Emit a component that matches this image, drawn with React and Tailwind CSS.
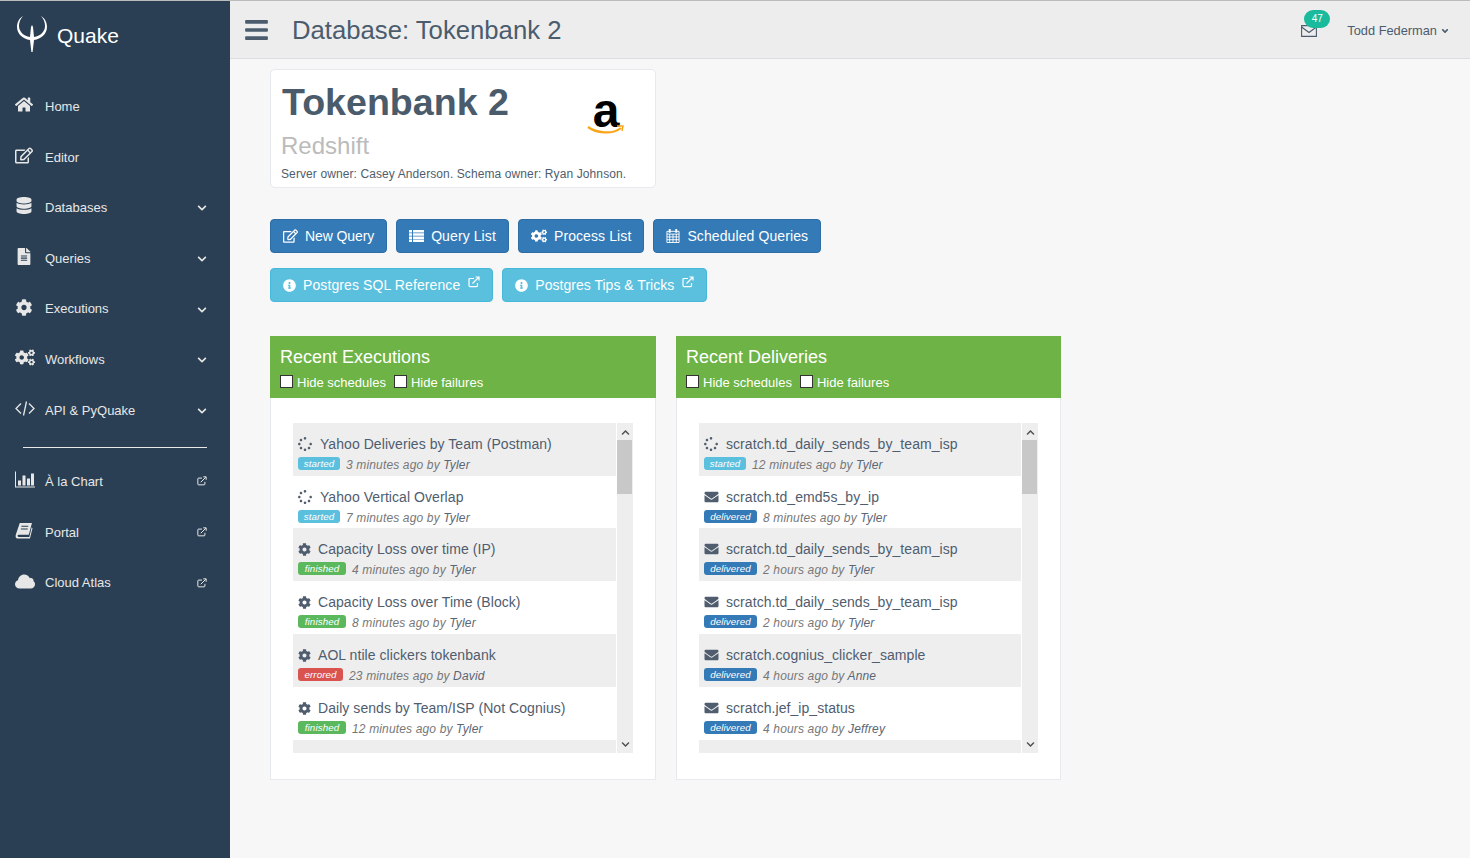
import React from 'react';
import {
  FaHome, FaRegEdit, FaDatabase, FaFileAlt, FaCog, FaCogs, FaChevronDown, FaChevronUp, FaBars,
  FaEnvelope, FaAngleDown, FaInfoCircle, FaSpinner,
} from 'react-icons/fa';

function ExternalIcon({ className }) {
  return (
    <svg viewBox="0 0 12 12" className={className} fill="none" stroke="currentColor" strokeWidth="1.2">
      <path d="M9.5 7v2.6a1 1 0 0 1-1 1H2a1 1 0 0 1-1-1V3.5a1 1 0 0 1 1-1h4" />
      <path d="M4.5 7.5 10.5 1.5M7.5 1h3.5v3.5" />
    </svg>
  );
}

function QuakeLogo() {
  return (
    <svg viewBox="0 0 30 36" className="w-[30px] h-[36px]" fill="#fff">
      <path d="M6 0C1 3 0 8 0 11c0 7 6 12 13 13l1.4 12h1.2L17 24c7-1 13-6 13-13 0-3-1-8-6-11 3 3 4 7 4 10 0 6-5 10-11 11l-1-10-1-2-1 2-1 10C7 20 2 16 2 10c0-3 1-7 4-10z" />
    </svg>
  );
}

function BookIcon({ className }) {
  return (
    <svg viewBox="0 0 16 16" className={className} fill="currentColor">
      <path d="M4 1h11.5l-3 11H3c-1.4 0-1.4 2 0 2h10l2.2-9 .8.8-2.4 9.7H2C0 15.5-.2 13.5.4 11.5z" />
      <path d="M5.5 4H12M5 6.500h6.500" stroke="#2a3f54" strokeWidth="1" />
    </svg>
  );
}

function ChartIcon({ className }) {
  return (
    <svg viewBox="0 0 20 16" className={className} fill="currentColor">
      <path d="M0 0h1v15h19v1H0z" />
      <path d="M3 9h3v5H3zM7.5 4h3v10h-3zM12 7h3v7h-3zM16 2h3v12h-3z" />
    </svg>
  );
}

function CodeIcon({ className }) {
  return (
    <svg viewBox="0 0 20 16" className={className} fill="none" stroke="currentColor" strokeWidth="1.3">
      <path d="M6 3 1 8l5 5M14 3l5 5-5 5M11.5 1l-3 14" />
    </svg>
  );
}

function ListIcon({ className }) {
  return (
    <svg viewBox="0 0 15 12" className={className} fill="currentColor">
      <path d="M0 0h3v2.500H0zM4 0h11v2.500H4zM0 3.200h3v2.500H0zM4 3.200h11v2.500H4zM0 6.400h3v2.500H0zM4 6.400h11v2.500H4zM0 9.600h3V12H0zM4 9.600h11V12H4z" />
    </svg>
  );
}

function CalendarIcon({ className }) {
  return (
    <svg viewBox="0 0 14 15" className={className} fill="none" stroke="currentColor" strokeWidth="1">
      <path d="M.5 2.500h13v12H.5z" />
      <path d="M.5 5.500h13M.5 8.500h13M.5 11.500h13M3.500 5.500v9M7 5.500v9M10.500 5.500v9" />
      <path d="M3.500 0v4M10.500 0v4" strokeWidth="2" />
    </svg>
  );
}

function MailOutline({ className }) {
  return (
    <svg viewBox="0 0 16 12" className={className} fill="none" stroke="currentColor" strokeWidth="1.1">
      <path d="M.6.6h14.800v10.800H.6z" />
      <path d="M.6 2 8 7.500 15.400 2" />
    </svg>
  );
}

function CloudIcon({ className }) {
  return (
    <svg viewBox="0 0 20 14" className={className} fill="currentColor">
      <path d="M4.500 14C2 14 0 12 0 9.700 0 7.800 1.200 6.200 3 5.700 3.300 2.500 6 0 9.200 0c2.500 0 4.700 1.500 5.700 3.700.5-.2 1-.3 1.500-.1 1.500.3 2.400 1.700 2.100 3.200 1 .6 1.500 1.700 1.500 2.900 0 2.400-1.900 4.300-4.300 4.300z" />
    </svg>
  );
}

const navTop = [
  { label: 'Home', icon: FaHome },
  { label: 'Editor', icon: FaRegEdit },
  { label: 'Databases', icon: FaDatabase, more: true },
  { label: 'Queries', icon: FaFileAlt, more: true },
  { label: 'Executions', icon: FaCog, more: true },
  { label: 'Workflows', icon: FaCogs, more: true, wide: true },
  { label: 'API & PyQuake', icon: CodeIcon, more: true, wide: true },
];

const navBottom = [
  { label: 'À la Chart', icon: ChartIcon, ext: true, wide: true },
  { label: 'Portal', icon: BookIcon, ext: true },
  { label: 'Cloud Atlas', icon: CloudIcon, ext: true, wide: true },
];

const executions = [
  { kind: 'spin', title: 'Yahoo Deliveries by Team (Postman)', status: 'started', when: '3 minutes ago by', who: 'Tyler' },
  { kind: 'spin', title: 'Yahoo Vertical Overlap', status: 'started', when: '7 minutes ago by', who: 'Tyler' },
  { kind: 'cog', title: 'Capacity Loss over time (IP)', status: 'finished', when: '4 minutes ago by', who: 'Tyler' },
  { kind: 'cog', title: 'Capacity Loss over Time (Block)', status: 'finished', when: '8 minutes ago by', who: 'Tyler' },
  { kind: 'cog', title: 'AOL ntile clickers tokenbank', status: 'errored', when: '23 minutes ago by', who: 'David' },
  { kind: 'cog', title: 'Daily sends by Team/ISP (Not Cognius)', status: 'finished', when: '12 minutes ago by', who: 'Tyler' },
];

const deliveries = [
  { kind: 'spin', title: 'scratch.td_daily_sends_by_team_isp', status: 'started', when: '12 minutes ago by', who: 'Tyler' },
  { kind: 'mail', title: 'scratch.td_emd5s_by_ip', status: 'delivered', when: '8 minutes ago by', who: 'Tyler' },
  { kind: 'mail', title: 'scratch.td_daily_sends_by_team_isp', status: 'delivered', when: '2 hours ago by', who: 'Tyler' },
  { kind: 'mail', title: 'scratch.td_daily_sends_by_team_isp', status: 'delivered', when: '2 hours ago by', who: 'Tyler' },
  { kind: 'mail', title: 'scratch.cognius_clicker_sample', status: 'delivered', when: '4 hours ago by', who: 'Anne' },
  { kind: 'mail', title: 'scratch.jef_ip_status', status: 'delivered', when: '4 hours ago by', who: 'Jeffrey' },
];

const badgeStyles = {
  started: 'bg-[#5bc0de] w-[42px]',
  finished: 'bg-[#5cb85c] w-[48px]',
  errored: 'bg-[#d9534f] w-[45px]',
  delivered: 'bg-[#337ab7] w-[53px]',
};

function NavRow({ item }) {
  const Icon = item.icon;
  return (
    <div className="h-[50.6px] flex items-center pl-[15px] pr-[23px] text-[#e7e7e7] text-[13px]">
      <div className="w-[30px] shrink-0 -mt-[4px]">
        <Icon className={item.wide ? 'w-[20px] h-[17px]' : 'w-[18px] h-[17px]'} />
      </div>
      <span className="flex-1">{item.label}</span>
      {item.more && <FaChevronDown className="w-[10px] h-[10px] mt-px" />}
      {item.ext && <ExternalIcon className="w-[10px] h-[10px] -mt-px" />}
    </div>
  );
}

function Sidebar() {
  return (
    <aside className="w-[230px] shrink-0 bg-[#2a3f54] flex flex-col">
      <div className="h-[80.4px] flex items-start pl-[17px] pt-[15px] text-white">
        <QuakeLogo />
        <span className="ml-[10px] mt-[5px] text-[21px] leading-[30px]">Quake</span>
      </div>
      {navTop.map(item => <NavRow key={item.label} item={item} />)}
      <div className="h-px bg-[#e7e7e7] ml-[23px] mr-[23px] mt-[11.4px] mb-[8.6px]" />
      {navBottom.map(item => <NavRow key={item.label} item={item} />)}
    </aside>
  );
}

function TopBar() {
  return (
    <header className="h-[58px] shrink-0 bg-[#ededed] border-b border-[#d9dee4] flex items-center pl-[15px] pr-[20px] text-[#4b5c6d]">
      <FaBars className="w-[23px] h-[26px]" />
      <h1 className="ml-[24px] mt-[3px] text-[25.7px] font-normal leading-none">Database: Tokenbank 2</h1>
      <div className="ml-auto flex items-center mt-[2px]">
        <div className="relative w-[16px] h-[12px] mr-[30px]">
          <MailOutline className="w-[16px] h-[12px]" />
          <span className="absolute -top-[15px] left-[3px] w-[26px] h-[18px] rounded-full bg-[#1abb9c] text-white text-[10px] leading-[18px] text-center">47</span>
        </div>
        <span className="text-[12.8px]">Todd Federman</span>
        <FaAngleDown className="ml-[3px] w-[10px] h-[10px]" />
      </div>
    </header>
  );
}

function ActionButton({ icon: Icon, iconClass = 'w-[15px] h-[14px] mr-[7px]', label, info, ext, track = 'tracking-[0.1px]' }) {
  const tone = info ? 'bg-[#5bc0de] border-[#46b8da]' : 'bg-[#337ab7] border-[#2e6da4]';
  return (
    <button className={`h-[34px] px-[12px] flex items-center rounded border text-white text-[14px] ${track} ${tone}`}>
      <Icon className={iconClass} />
      <span>{label}</span>
      {ext && <ExternalIcon className="w-[12px] h-[12px] ml-[8px] -mt-[6px]" />}
    </button>
  );
}

function RowIcon({ kind }) {
  if (kind === 'spin') return <FaSpinner className="w-[14px] h-[14px] mr-[8px]" />;
  if (kind === 'cog') return <FaCog className="w-[13px] h-[13px] mr-[7px]" />;
  return <FaEnvelope className="w-[15px] h-[14px] mr-[7px]" />;
}

function ListRow({ row, index }) {
  const shaded = index % 2 === 0;
  return (
    <div className={`shrink-0 pl-[5px] pt-[13px] ${index === 1 ? 'h-[52px]' : 'h-[53px]'} ${shaded ? 'bg-[#eeeeee]' : 'bg-white'}`}>
      <div className="flex items-center h-[16px] text-[14px] tracking-[0.06px] text-[#4f5d6e]">
        <RowIcon kind={row.kind} />
        <span>{row.title}</span>
      </div>
      <div className="flex items-center h-[13px] mt-[5px]">
        <span className={`h-[13px] leading-[13px] text-center rounded-[3px] text-white text-[9.75px] tracking-[0.1px] italic ${badgeStyles[row.status]}`}>{row.status}</span>
        <span className="ml-[6px] mt-[2px] text-[12px] tracking-[0.15px] italic text-[#777777] whitespace-pre">{row.when} <span className="text-[#5a6675]">{row.who}</span></span>
      </div>
    </div>
  );
}

function Panel({ title, rows, className, listClass }) {
  return (
    <section className={`h-[444px] flex flex-col ${className}`}>
      <div className="h-[62px] shrink-0 bg-[#6db345] text-white px-[10px] pt-[10px]">
        <h2 className="text-[18px] font-normal leading-[22px]">{title}</h2>
        <div className="flex items-start text-[13px] mt-[7px] leading-[16px]">
          <input type="checkbox" className="appearance-none w-[13px] h-[13px] bg-white border border-[#333333] mr-[4px]" />
          <span>Hide schedules</span>
          <input type="checkbox" className="appearance-none w-[13px] h-[13px] bg-white border border-[#333333] ml-[8px] mr-[4px]" />
          <span>Hide failures</span>
        </div>
      </div>
      <div className="flex-1 bg-white border border-t-0 border-[#e6e9ed] pt-[25px] pl-[22px]">
        <div className={`flex h-[330px] ${listClass}`}>
          <div className="flex-1 flex flex-col overflow-hidden">
            {rows.map((row, i) => <ListRow key={i} row={row} index={i} />)}
            <div className="flex-1 bg-[#eeeeee]" />
          </div>
          <div className="w-[16px] ml-px bg-[#eeeeee] flex flex-col items-center text-[#505050] relative">
            <FaChevronUp className="w-[9px] h-[9px] mt-[5px]" />
            <div className="absolute top-[17px] left-0 w-[15px] h-[54px] bg-[#c8c8c8]" />
            <FaChevronDown className="w-[9px] h-[9px] mt-auto mb-[4px]" />
          </div>
        </div>
      </div>
    </section>
  );
}

export default function App() {
  return (
    <div className="h-[858px] flex flex-col bg-[#f7f7f7] overflow-hidden text-[#4b5c6d]" style={{ fontFamily: '"Liberation Sans", Arial, sans-serif' }}>
      <div className="h-px shrink-0 bg-[#bbbbbb]" />
      <div className="flex flex-1 min-h-0">
        <Sidebar />
        <main className="flex-1 flex flex-col min-w-0">
          <TopBar />
          <div className="pl-[40px] pt-[10px]">
            <div className="w-[386px] h-[119px] bg-white border border-[#e6e9ed] rounded-[5px] pl-[10px] pr-[30px] flex justify-between">
              <div className="w-[300px] whitespace-nowrap">
                <div className="text-[37.6px] font-bold leading-[42px] mt-[11px] ml-px text-[#4a5b6b]">Tokenbank 2</div>
                <div className="text-[24px] leading-[28px] mt-[9px] text-[#bbbbbb]">Redshift</div>
                <div className="text-[12px] tracking-[0.1px] leading-[14px] mt-[7px] text-[#4f5d6e]">Server owner: Casey Anderson. Schema owner: Ryan Johnson.</div>
              </div>
              <div className="relative w-[38px] h-[45px] mt-[23px]">
                <div className="text-[48px] font-bold leading-[36px] text-black text-center">a</div>
                <svg viewBox="0 0 38 10" className="absolute left-0 top-[32px] w-[38px] h-[10px]" fill="none">
                  <path d="M1 2c8 6 24 8 33 1" stroke="#f9a51a" strokeWidth="2.200" />
                  <path d="M30 1h6l-1 5" stroke="#f9a51a" strokeWidth="1.500" />
                </svg>
              </div>
            </div>

            <div className="flex gap-[9px] mt-[31px]">
              <ActionButton icon={FaRegEdit} label="New Query" track="tracking-[-0.1px]" />
              <ActionButton icon={ListIcon} label="Query List" />
              <ActionButton icon={FaCogs} iconClass="w-[16px] h-[14px] mr-[7px]" label="Process List" />
              <ActionButton icon={CalendarIcon} iconClass="w-[14px] h-[14px] mr-[7px]" label="Scheduled Queries" />
            </div>
            <div className="flex gap-[9px] mt-[15px]">
              <ActionButton icon={FaInfoCircle} iconClass="w-[13px] h-[13px] mr-[7px]" label="Postgres SQL Reference" info ext />
              <ActionButton icon={FaInfoCircle} iconClass="w-[13px] h-[13px] mr-[7px]" label="Postgres Tips & Tricks" info ext track="tracking-[0.02px]" />
            </div>

            <div className="flex mt-[34px]">
              <Panel title="Recent Executions" rows={executions} className="w-[386px]" listClass="w-[340px]" />
              <Panel title="Recent Deliveries" rows={deliveries} className="w-[385px] ml-[20px]" listClass="w-[339px]" />
            </div>
          </div>
        </main>
      </div>
    </div>
  );
}
